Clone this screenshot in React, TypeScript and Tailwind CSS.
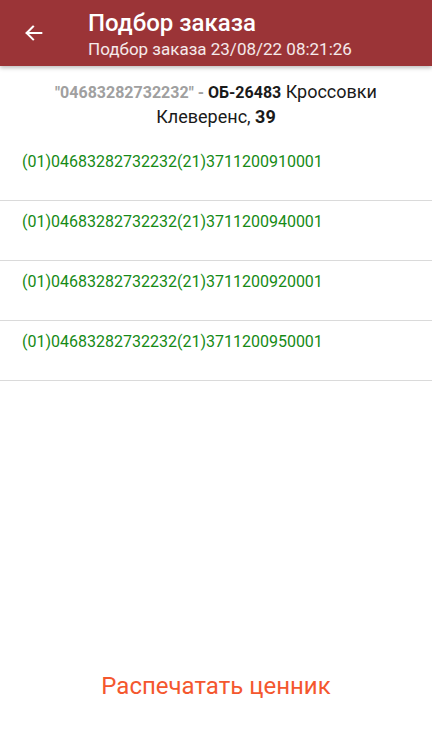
import React from "react";

const codes = [
  "(01)04683282732232(21)3711200910001",
  "(01)04683282732232(21)3711200940001",
  "(01)04683282732232(21)3711200920001",
  "(01)04683282732232(21)3711200950001",
];

export default function App() {
  return (
    <div
      className="w-[432px] h-[739px] bg-white flex flex-col overflow-hidden"
      style={{ fontFamily: "Roboto, 'Noto Sans', sans-serif" }}
    >
      <div className="h-[66px] bg-[#9b3437] flex items-center shadow-[0_2px_4px_rgba(0,0,0,0.25)] relative z-10 shrink-0">
        <div className="w-[88px] flex items-center pl-[23px]">
          <svg width="22" height="22" viewBox="0 0 24 24" fill="none">
            <path d="M20 12H4M4 12l7-7M4 12l7 7" stroke="white" strokeWidth="2.2" strokeLinecap="square" />
          </svg>
        </div>
        <div className="flex flex-col pt-[2px]">
          <div className="text-white text-[24px] leading-[28px] font-medium">Подбор заказа</div>
          <div className="text-white/90 text-[17px] leading-[22px] mt-[1px]">Подбор заказа 23/08/22 08:21:26</div>
        </div>
      </div>
      <div className="pt-[14px] pb-[12px] px-4 text-center text-[18px] leading-[24px] text-[#1a1a1a]">
        <span className="text-[#a0a0a0] font-bold text-[16px]">"04683282732232" - </span>
        <span className="font-bold text-[16px]">ОБ-26483</span> Кроссовки Клеверенс, <span className="font-bold">39</span>
      </div>
      {codes.map((c) => (
        <div key={c} className="h-[60px] border-b border-[#dadada] pl-[22px] pt-[10px] text-[16px] leading-[22px] text-[#168a16]">
          {c}
        </div>
      ))}
      <div className="flex-1" />
      <div className="h-[68px] flex items-start justify-center">
        <span className="text-[24px] leading-[30px] text-[#f4572e]">Распечатать ценник</span>
      </div>
    </div>
  );
}
